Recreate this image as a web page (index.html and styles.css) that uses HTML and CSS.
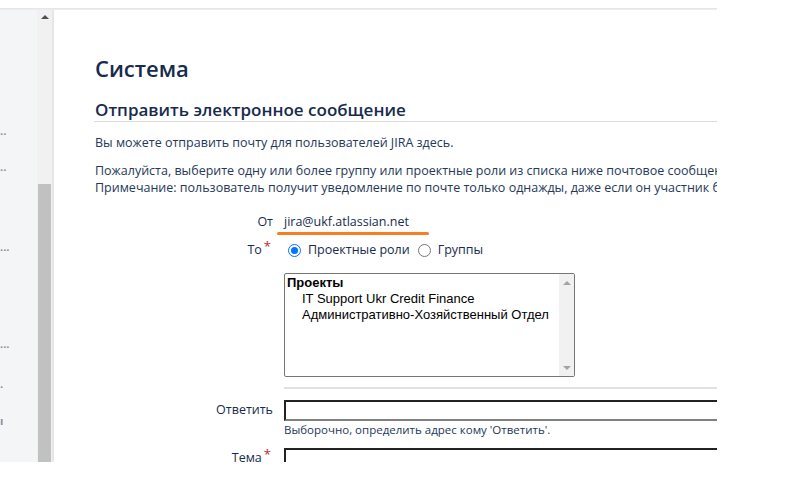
FILE: index.html
```html
<!DOCTYPE html>
<html lang="ru">
<head>
<meta charset="utf-8">
<title>Отправить электронное сообщение</title>
<link rel="stylesheet" href="styles.css">
</head>
<body>
<div class="shot">
  <div class="topline"></div>
  <div class="frame">
    <nav class="sidebar">
      <ul class="nav">
        <li class="n1">..</li>
        <li class="n2">..</li>
        <li class="n3">...</li>
        <li class="n4">...</li>
        <li class="n5">.</li>
        <li class="n6">ı</li>
      </ul>
    </nav>
    <div class="vscroll">
      <div class="arrow-up"></div>
      <div class="thumb"></div>
    </div>
    <div class="edge"></div>
    <main class="main">
      <h1 class="title">Система</h1>
      <h2 class="subtitle">Отправить электронное сообщение</h2>
      <p class="intro">Вы можете отправить почту для пользователей JIRA здесь.</p>
      <p class="note">Пожалуйста, выберите одну или более группу или проектные роли из списка ниже почтовое сообщение будет отправлено всем участникам.<br>Примечание: пользователь получит уведомление по почте только однажды, даже если он участник более чем одной группы.</p>
      <form class="form">
        <div class="row row-from">
          <span class="label">От</span>
          <span class="value from"><span class="addr">jira@ukf.atlassian.net</span><span class="mark"></span></span>
        </div>
        <div class="row row-to">
          <span class="label req-label">То<span class="req">*</span></span>
          <span class="value radios">
            <label class="radio"><span class="rb on"></span>Проектные роли</label>
            <label class="radio"><span class="rb"></span>Группы</label>
          </span>
        </div>
        <div class="row row-list">
          <span class="label"></span>
          <div class="value">
            <div class="listbox">
              <div class="opts">
                <div class="grp">Проекты</div>
                <div class="opt">IT Support Ukr Credit Finance</div>
                <div class="opt">Административно-Хозяйственный Отдел</div>
              </div>
              <div class="lscroll"><span class="la up"></span><span class="la down"></span></div>
            </div>
          </div>
        </div>
        <div class="row row-rule">
          <span class="label"></span>
          <div class="value rule"></div>
        </div>
        <div class="row row-reply">
          <span class="label">Ответить</span>
          <div class="value">
            <div class="input"></div>
            <div class="help">Выборочно, определить адрес кому 'Ответить'.</div>
          </div>
        </div>
        <div class="row row-subj">
          <span class="label req-label">Тема<span class="req">*</span></span>
          <div class="value"><div class="input"></div></div>
        </div>
      </form>
    </main>
  </div>
</div>
</body>
</html>
```

FILE: styles.css
```css
html, body {
  margin: 0;
  padding: 0;
  background: #ffffff;
}
body {
  font-family: "Open Sans", "Noto Sans", sans-serif;
  color: #172b4d;
}
.shot {
  width: 717px;
  height: 454px;
  margin-top: 8px;
  overflow: hidden;
  display: flex;
  flex-direction: column;
}
.topline {
  height: 2px;
  background: linear-gradient(#e3e4e8, #eceef1);
  flex: none;
}
.frame {
  flex: 1;
  display: flex;
  min-height: 0;
}
.sidebar {
  width: 37px;
  flex: none;
  background: #f4f5f7;
  overflow: hidden;
}
.nav {
  list-style: none;
  margin: 0;
  padding: 0;
  font-size: 11px;
  line-height: 10px;
  color: #8a90a6;
  font-weight: 700;
}
.nav li { height: 10px; }
.n1 { margin-top: 116px; }
.n2 { margin-top: 26px; }
.n3 { margin-top: 70px; }
.n4 { margin-top: 87px; }
.n5 { margin-top: 30px; }
.n6 { margin-top: 27px; }
.vscroll {
  width: 15px;
  flex: none;
  background: #f1f1f1;
  display: flex;
  flex-direction: column;
  align-items: center;
}
.arrow-up {
  margin-top: 5px;
  width: 0;
  height: 0;
  border-left: 4px solid transparent;
  border-right: 4px solid transparent;
  border-bottom: 4px solid #505050;
}
.thumb {
  margin-top: 165px;
  width: 13px;
  flex: 1;
  background: #c1c1c1;
}
.edge {
  width: 2px;
  flex: none;
  background: #e6e6e8;
}
.main {
  flex: 1;
  min-width: 0;
  padding: 44px 0 0 41px;
  white-space: nowrap;
  overflow: hidden;
}
.title {
  margin: 0;
  font-size: 22px;
  font-weight: 600;
  line-height: 28px;
  color: #172b4d;
}
.subtitle {
  margin: 17px 0 0 -1px;
  padding: 0 0 0 1px;
  font-size: 17px;
  font-weight: 600;
  line-height: 22px;
  color: #172b4d;
  border-bottom: 1px solid #d9dbe0;
}
.intro, .note {
  margin: 0;
  font-size: 12.5px;
  line-height: 17px;
  color: #253858;
}
.intro { margin-top: 12px; }
.note { margin-top: 11px; }
.form {
  margin-top: 17px;
  font-size: 12.5px;
}
.row {
  display: grid;
  grid-template-columns: 178px 1fr;
  column-gap: 11px;
}
.value { min-width: 0; }
.label {
  text-align: right;
  color: #172b4d;
  line-height: 18px;
}
.req {
  color: #c1272d;
  font-size: 13px;
  margin-left: 2px;
  line-height: 0;
  vertical-align: 3px;
}
.req-label { padding-right: 2px; }
.from {
  position: relative;
  line-height: 18px;
}
.mark {
  position: absolute;
  left: -7px;
  top: 19px;
  width: 152px;
  height: 3px;
  border-radius: 2px;
  background: #f77f1f;
}
.row-to { margin-top: 10px; }
.radios {
  display: flex;
  align-items: center;
  gap: 8px;
  line-height: 18px;
}
.radio {
  display: flex;
  align-items: center;
  gap: 7px;
}
.radio:first-child { margin-left: 4px; }
.rb {
  width: 11px;
  height: 11px;
  border: 1px solid #767676;
  border-radius: 50%;
  box-sizing: content-box;
  position: relative;
}
.rb.on {
  border-color: #0075ff;
  background: #fff;
}
.rb.on::after {
  content: "";
  position: absolute;
  left: 2px;
  top: 2px;
  width: 7px;
  height: 7px;
  border-radius: 50%;
  background: #0075ff;
}
.row-list { margin-top: 14px; }
.listbox {
  width: 289px;
  height: 102px;
  border: 1px solid #767676;
  border-radius: 2px;
  display: flex;
  font-family: "Liberation Sans", Arial, sans-serif;
  font-size: 13px;
  color: #000;
  line-height: 16px;
}
.opts {
  flex: 1;
  padding: 1px 0 0 2px;
}
.grp { font-weight: 700; }
.opt { padding-left: 15px; }
.lscroll {
  width: 15px;
  background: #f1f1f1;
  display: flex;
  flex-direction: column;
  justify-content: space-between;
  align-items: center;
  padding: 7px 0 6px;
}
.la {
  width: 0;
  height: 0;
  border-left: 4px solid transparent;
  border-right: 4px solid transparent;
}
.la.up { border-bottom: 4px solid #a3a3a3; }
.la.down { border-top: 4px solid #a3a3a3; }
.row-rule { margin-top: 10px; }
.rule {
  height: 2px;
  background: #e0e1e6;
}
.row-reply { margin-top: 11px; }
.row-reply .label { padding-top: 1px; }
.input {
  width: 480px;
  height: 17px;
  border: 2px solid;
  border-color: #222 #808080 #808080 #222;
  background: #fff;
}
.help {
  font-size: 11.5px;
  line-height: 16px;
  margin-top: 1px;
  color: #253858;
}
.row-subj { margin-top: 10px; }
.row-subj .label { padding-top: 1px; }
```
